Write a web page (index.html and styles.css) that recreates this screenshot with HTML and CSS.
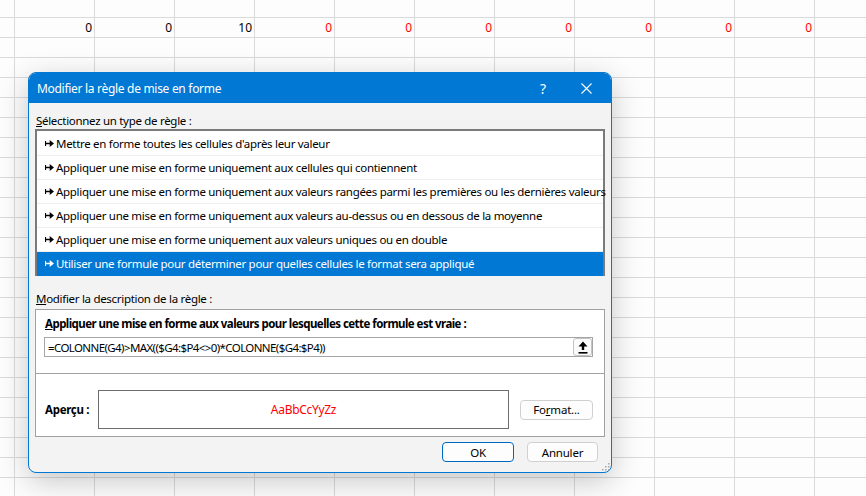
FILE: index.html
```html
<!DOCTYPE html>
<html lang="fr">
<head>
  <meta charset="UTF-8">
  <title>Modifier la règle de mise en forme</title>
  <link rel="stylesheet" href="styles.css">
</head>
<body>

  <div class="sheet">
    <div class="values">
      <span class="cell">0</span>
      <span class="cell">0</span>
      <span class="cell">10</span>
      <span class="cell red">0</span>
      <span class="cell red">0</span>
      <span class="cell red">0</span>
      <span class="cell red">0</span>
      <span class="cell red">0</span>
      <span class="cell red">0</span>
      <span class="cell red">0</span>
    </div>
  </div>

  <div class="dialog">
    <div class="titlebar">
      <span class="title">Modifier la règle de mise en forme</span>
      <span class="help">?</span>
      <span class="close">
        <svg width="11" height="11" viewBox="0 0 11 11"><path d="M0.5 0.5 L10.5 10.5 M10.5 0.5 L0.5 10.5" stroke="#fff" stroke-width="1.1" fill="none"/></svg>
      </span>
    </div>

    <div class="content">
      <div class="label top"><u>S</u>électionnez un type de règle :</div>

      <ul class="rules">
        <li><i class="arrow"></i>Mettre en forme toutes les cellules d'après leur valeur</li>
        <li><i class="arrow"></i>Appliquer une mise en forme uniquement aux cellules qui contiennent</li>
        <li><i class="arrow"></i>Appliquer une mise en forme uniquement aux valeurs rangées parmi les premières ou les dernières valeurs</li>
        <li><i class="arrow"></i>Appliquer une mise en forme uniquement aux valeurs au-dessus ou en dessous de la moyenne</li>
        <li><i class="arrow"></i>Appliquer une mise en forme uniquement aux valeurs uniques ou en double</li>
        <li class="selected"><i class="arrow"></i>Utiliser une formule pour déterminer pour quelles cellules le format sera appliqué</li>
      </ul>

      <div class="label mid"><u>M</u>odifier la description de la règle :</div>

      <div class="desc">
        <div class="formula-part">
          <div class="bold"><u>A</u>ppliquer une mise en forme aux valeurs pour lesquelles cette formule est vraie :</div>
          <div class="formula">
            <span class="formula-text">=COLONNE(G4)&gt;MAX(($G4:$P4&lt;&gt;0)*COLONNE($G4:$P4))</span>
            <span class="collapse">
              <svg width="10" height="13" viewBox="0 0 10 13"><path d="M5 0.5 L9.5 5.5 L6.2 5.5 L6.2 9 L3.8 9 L3.8 5.5 L0.5 5.5 Z" fill="#000"/><rect x="0.5" y="11" width="9" height="1.6" fill="#000"/></svg>
            </span>
          </div>
        </div>
        <div class="preview-part">
          <div class="bold preview-label">Aperçu :</div>
          <div class="preview">AaBbCcYyZz</div>
          <button class="btn format">Fo<u>r</u>mat...</button>
        </div>
      </div>

      <div class="actions">
        <button class="btn ok">OK</button>
        <button class="btn">Annuler</button>
      </div>
    </div>

    <svg class="grip" width="9" height="9" viewBox="0 0 9 9">
      <rect x="7" y="1" width="1.5" height="1.5" fill="#a8a8a8"/>
      <rect x="4" y="4" width="1.5" height="1.5" fill="#a8a8a8"/>
      <rect x="7" y="4" width="1.5" height="1.5" fill="#a8a8a8"/>
      <rect x="1" y="7" width="1.5" height="1.5" fill="#a8a8a8"/>
      <rect x="4" y="7" width="1.5" height="1.5" fill="#a8a8a8"/>
      <rect x="7" y="7" width="1.5" height="1.5" fill="#a8a8a8"/>
    </svg>
  </div>

</body>
</html>
```

FILE: styles.css
```css
body {
  margin: 0;
  font-family: "Segoe UI", "Noto Sans", sans-serif;
  font-size: 12px;
  color: #000;
}

/* spreadsheet behind the dialog */
.sheet {
  height: 100vh;
  background-color: #fdfdfd;
  background-image:
    linear-gradient(to right, #dadada 1px, transparent 1px),
    linear-gradient(to bottom, #dadada 1px, transparent 1px);
  background-size: 80px 20px;
  background-position: 14px 17px;
  padding: 18px 0 0 15px;
  box-sizing: border-box;
}

.values {
  display: flex;
}

.cell {
  width: 80px;
  height: 19px;
  line-height: 19px;
  text-align: right;
  padding-right: 3px;
  box-sizing: border-box;
}

.red {
  color: #ff0000;
}

/* dialog window */
.dialog {
  position: absolute;
  left: 28px;
  top: 72px;
  width: 584px;
  height: 401px;
  box-sizing: border-box;
  border: 1px solid #0078d4;
  border-radius: 8px;
  background: #f3f3f3;
  box-shadow: 0 8px 30px rgba(0, 0, 0, 0.22);
  overflow: hidden;
  font-size: 11.5px;
  letter-spacing: -0.3px;
}

.titlebar {
  height: 30px;
  background: #0078d4;
  color: #fff;
  display: flex;
  align-items: center;
  padding-left: 8px;
  font-size: 12px;
  letter-spacing: -0.3px;
}

.title {
  flex: 1;
}

.help {
  font-size: 14px;
  width: 14px;
  text-align: center;
  margin-right: 31px;
}

.close {
  display: flex;
  margin-right: 19px;
}

.content {
  padding: 0 6px;
}

.label {
  line-height: 16px;
}

.label.top {
  padding: 10px 0 0 1px;
}

.label.mid {
  margin: 15px 0 2px 1px;
}

.rules {
  list-style: none;
  margin: 0;
  padding: 1px 0 0;
  height: 147px;
  box-sizing: border-box;
  border: 2px solid #7a7a7a;
  background: #fff;
}

.rules li {
  height: 24px;
  display: flex;
  align-items: center;
  padding-left: 8px;
  border-bottom: 1px solid #eeeeee;
  box-sizing: border-box;
  white-space: nowrap;
}

.rules li.selected {
  background: #0078d4;
  color: #fff;
  border-bottom-color: #0078d4;
}

.arrow {
  flex-shrink: 0;
  width: 9px;
  height: 7px;
  margin-right: 2px;
  background: currentColor;
  clip-path: polygon(0 15%, 12% 15%, 12% 40%, 52% 40%, 52% 0, 100% 50%, 52% 100%, 52% 60%, 12% 60%, 12% 85%, 0 85%);
}

.desc {
  height: 128px;
  box-sizing: border-box;
  border: 1px solid #a0a0a0;
  background: #fff;
}

.formula-part {
  padding: 6px 11px 0 8px;
  height: 64px;
  box-sizing: border-box;
  border-bottom: 1px solid #a0a0a0;
}

.bold {
  font-weight: bold;
  line-height: 16px;
  padding-left: 1px;
  letter-spacing: -0.55px;
}

.formula {
  margin-top: 5px;
  height: 20px;
  box-sizing: border-box;
  border: 1px solid #a6a6a6;
  display: flex;
  align-items: center;
  padding-left: 3px;
}

.formula-text {
  flex: 1;
  letter-spacing: -0.6px;
}

.collapse {
  width: 19px;
  height: 18px;
  box-sizing: border-box;
  border: 1px solid #c4c4c4;
  border-radius: 3px;
  background: #fbfbfb;
  display: flex;
  align-items: center;
  justify-content: center;
}

.preview-part {
  display: flex;
  align-items: center;
  padding: 16px 11px 0 9px;
}

.preview-label {
  width: 53px;
  padding-left: 0;
  letter-spacing: -0.3px;
}

.preview {
  width: 411px;
  height: 39px;
  box-sizing: border-box;
  border: 1px solid #6d6d6d;
  color: #ff0000;
  font-size: 12px;
  display: flex;
  align-items: center;
  justify-content: center;
}

.btn {
  font-family: inherit;
  font-size: 11.5px;
  letter-spacing: -0.2px;
  color: #000;
  height: 20px;
  width: 71px;
  padding: 0;
  border: 1px solid #d0d0d0;
  border-radius: 4px;
  background: #fdfdfd;
}

.format {
  width: 73px;
  margin-left: 11px;
}

.actions {
  display: flex;
  justify-content: flex-end;
  gap: 13px;
  margin: 5px 7px 0 0;
}

.btn.ok {
  width: 72px;
  border-color: #0067c0;
}

.grip {
  position: absolute;
  right: 1px;
  bottom: 1px;
}
```
